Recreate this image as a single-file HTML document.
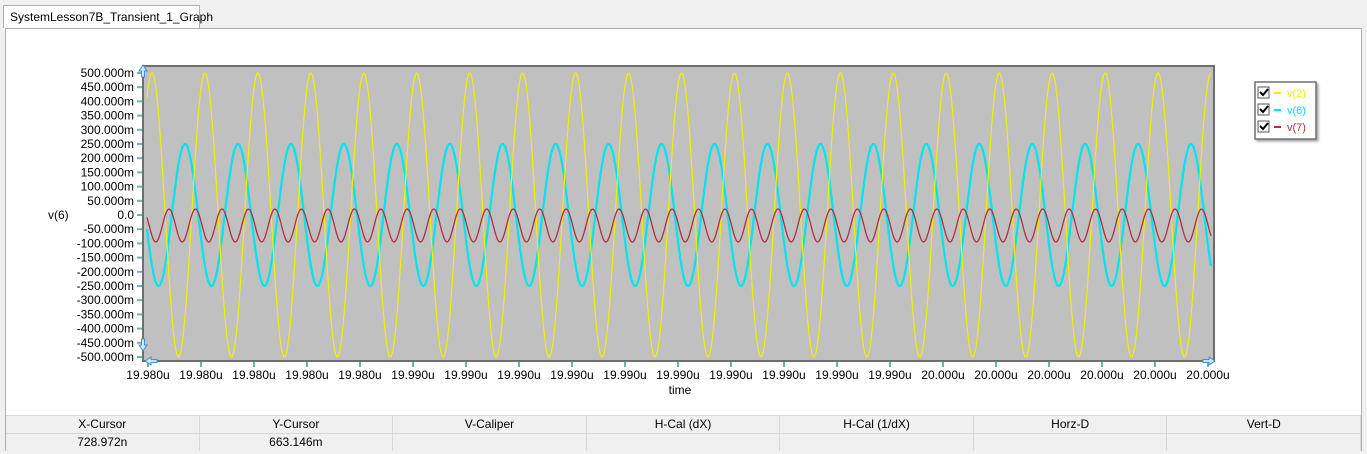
<!DOCTYPE html>
<html><head><meta charset="utf-8"><style>
body{margin:0;width:1367px;height:454px;background:#f0f0f0;font-family:"Liberation Sans",sans-serif;overflow:hidden;position:relative}
.tab{position:absolute;left:3px;top:5px;width:197px;height:23px;background:#fff;border:1px solid #adadad;border-bottom:none;font-size:12px;line-height:22px;padding-left:6px;box-sizing:border-box;z-index:2}
.panel{position:absolute;left:5px;top:28px;width:1357px;height:423px;background:#fff;border:1px solid #adadad;box-sizing:border-box}
svg{position:absolute;left:0;top:0}
.tbl{position:absolute;left:6px;top:415px;width:1355px;height:34px;font-size:12px}
.row{display:flex;height:17px;line-height:17px}
.row div{flex:1;text-align:center;border-right:1px solid #d8d8d8;background:#f0f0f0}
.r1{border-top:1px solid #d8d8d8;border-bottom:1px solid #d8d8d8}
</style></head><body>
<div class="tab">SystemLesson7B_Transient_1_Graph</div>
<div class="panel"></div>
<svg id="s" width="1367" height="454" font-family="Liberation Sans, sans-serif" font-size="12"></svg>
<div class="tbl">
<div class="row r1"><div>X-Cursor</div><div>Y-Cursor</div><div>V-Caliper</div><div>H-Cal (dX)</div><div>H-Cal (1/dX)</div><div>Horz-D</div><div>Vert-D</div></div>
<div class="row"><div>728.972n</div><div>663.146m</div><div></div><div></div><div></div><div></div><div></div></div>
</div>
<script>
var s=document.getElementById('s'),h='';
h+='<rect x="143" y="66" width="1071" height="295" fill="#c0c0c0" stroke="#6e6e6e" stroke-width="2"/>';
for(var i=0;i<=20;i++){var v=500-50*i,y=73+i*14.2;
h+='<line x1="137" y1="'+y+'" x2="143" y2="'+y+'" stroke="#6ab4b4" stroke-width="2"/>';
h+='<text x="134" y="'+(y+4)+'" text-anchor="end">'+(v==0?'0.0':(v.toFixed(3)+'m'))+'</text>';}
for(var i=0;i<=20;i++){var x=148+i*53;
h+='<line x1="'+x+'" y1="361" x2="'+x+'" y2="367" stroke="#6ab4b4" stroke-width="2"/>';
var l=i<5?'19.980u':(i<15?'19.990u':'20.000u');
h+='<text x="'+x+'" y="379" text-anchor="middle">'+l+'</text>';}
h+='<text x="48" y="219">v(6)</text><text x="680" y="394" text-anchor="middle">time</text>';
function wave(f,c,w){var p=[];for(var x=147;x<=1211;x+=1)p.push(x+','+f(x).toFixed(1));return '<polyline points="'+p.join(' ')+'" fill="none" stroke="'+c+'" stroke-width="'+w+'"/>';}
var P=52.95;
h+=wave(function(x){return 215-71*Math.cos(2*Math.PI*(x-185)/P)},'#00e5ee',2.2);
h+=wave(function(x){return 215-142*Math.cos(2*Math.PI*(x-152)/P)},'#f0f000',1.2);
h+=wave(function(x){return 225.5-16.5*Math.cos(2*Math.PI*(x-169)/(P/2))},'#b03040',1.3);
h+='<rect x="143" y="66" width="1071" height="295" fill="none" stroke="#6e6e6e" stroke-width="2"/>';
h+='<path d="M143 65 l-4 6 h2.5 v6 h3 v-6 h2.5z" fill="#cfe6ff" stroke="#3d8fe0"/>';
h+='<path d="M143 351 l-4 -6 h2.5 v-6 h3 v6 h2.5z" fill="#cfe6ff" stroke="#3d8fe0"/>';
h+='<path d="M145 361 l6 -4 v2.5 h6 v3 h-6 v2.5z" fill="#cfe6ff" stroke="#3d8fe0"/>';
h+='<path d="M1215 361 l-6 -4 v2.5 h-6 v3 h6 v2.5z" fill="#cfe6ff" stroke="#3d8fe0"/>';
h+='<rect x="1255" y="82" width="61" height="57" fill="#fff" stroke="#707070" stroke-width="1.5" style="filter:drop-shadow(2px 2px 1px #aaa)"/>';
var lg=[['v(2)','#f0f000'],['v(6)','#00e5ee'],['v(7)','#b03040']];
for(var i=0;i<3;i++){var y=93+i*17;
h+='<rect x="1258" y="'+(y-6)+'" width="11" height="11" fill="#fff" stroke="#555"/>';
h+='<path d="M1260 '+(y-1)+' l3 3 l5 -6" fill="none" stroke="#000" stroke-width="2"/>';
h+='<line x1="1274" y1="'+y+'" x2="1281" y2="'+y+'" stroke="'+lg[i][1]+'" stroke-width="2"/>';
h+='<text x="1287" y="'+(y+4)+'" fill="'+lg[i][1]+'" font-size="11">'+lg[i][0]+'</text>';}
s.innerHTML=h;
</script>
</body></html>
